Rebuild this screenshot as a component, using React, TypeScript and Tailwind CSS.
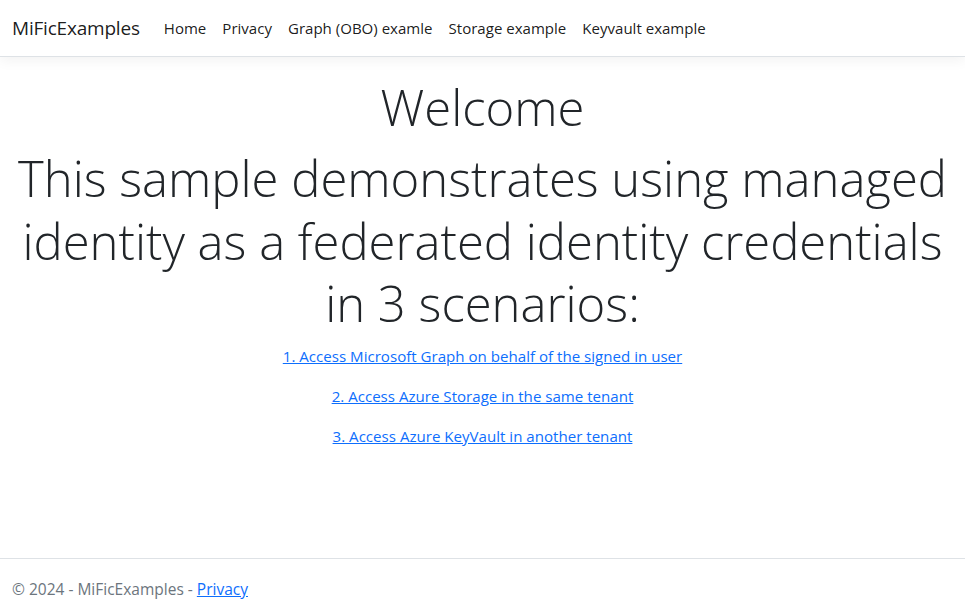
import React from "react";

export default function App() {
  const font = { fontFamily: '"Open Sans", "Noto Sans", sans-serif' };
  return (
    <div className="relative min-h-[618px] bg-white text-[#212529]" style={font}>
      <header>
        <nav className="flex h-[57px] items-center border-b border-[#dee2e6] bg-white px-3 shadow-[0_4px_12px_rgba(0,0,0,0.05)]">
          <a className="mr-4 text-[19px] text-black/90 tracking-[-0.2px]">MiFicExamples</a>
          <ul className="flex items-center text-[15.05px] text-black/90">
            <li className="px-2">Home</li>
            <li className="px-2">Privacy</li>
            <li className="px-2">Graph (OBO) examle</li>
            <li className="px-2">Storage example</li>
            <li className="px-2">Keyvault example</li>
          </ul>
        </nav>
      </header>
      <main className="px-3 pt-[20px] text-center">
        <h1 className="text-[49px] font-light leading-[60px]">Welcome</h1>
        <h1 className="mt-[10px] text-[49px] font-light leading-[62.5px]">
          This sample demonstrates using managed<br />
          identity as a federated identity credentials<br />
          in 3 scenarios:
        </h1>
        <div className="mt-[9px] text-[15.1px] leading-6 text-[#0d6efd]">
          <p className="mb-4"><a className="underline">1. Access Microsoft Graph on behalf of the signed in user</a></p>
          <p className="mb-4"><a className="underline">2. Access Azure Storage in the same tenant</a></p>
          <p className="mb-4"><a className="underline">3. Access Azure KeyVault in another tenant</a></p>
        </div>
      </main>
      <footer className="absolute left-0 right-0 top-[558px] h-[60px] border-t border-[#dee2e6] px-3 text-[15.5px] leading-[60px] text-[#6c757d]">
        © 2024 - MiFicExamples - <a className="text-[#0d6efd] underline">Privacy</a>
      </footer>
    </div>
  );
}
